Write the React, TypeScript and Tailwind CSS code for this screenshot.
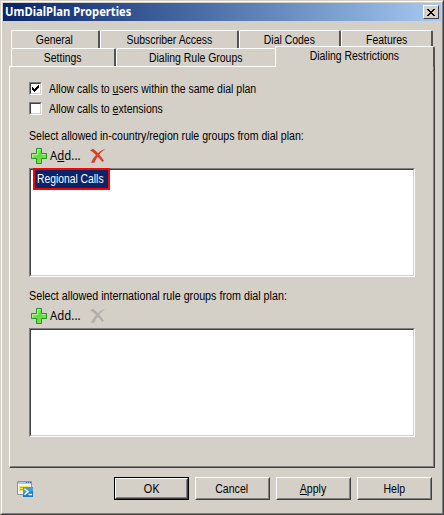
import React from "react";

const raised = "border border-t-white border-l-white border-r-[#403e40] border-b-[#403e40]";

function Plus() {
  return (
    <svg width="16" height="16" viewBox="0 0 16 16" className="shrink-0">
      <defs>
        <linearGradient id="plus" x1="0" y1="0" x2="1" y2="1">
          <stop offset="0" stopColor="#b8f090" />
          <stop offset="0.5" stopColor="#62d63f" />
          <stop offset="1" stopColor="#8cf05c" />
        </linearGradient>
      </defs>
      <path d="M5.5 .5h5v5h5v5h-5v5h-5v-5h-5v-5h5z" fill="url(#plus)" stroke="#189a1c" strokeLinejoin="round" />
      <path d="M6.5 6.5v-5h3M1.5 9.500v-3h5M10.500 6.500h4" fill="none" stroke="#c9f5ab" strokeOpacity=".7" />
    </svg>
  );
}

function Cross({ off = false }: { off?: boolean }) {
  const c = off ? "#b2afaa" : "#d83e28";
  return (
    <svg width="16" height="16" viewBox="0 0 16 16" className="shrink-0">
      <path d="M0 2.200 3.200 .7C6.500 3.200 11 8 14 12.800L12.500 14C8.500 9.500 5 5.300 0 2.200Z" fill={c} />
      <path d="M15.500 .8C11.500 3.500 6.500 9 4.600 14.600L1 15C3.200 9 8.500 3 15.500 .8Z" fill={c} />
    </svg>
  );
}

function ShellIcon() {
  return (
    <svg width="17" height="17" viewBox="0 0 17 17" className="shrink-0">
      <path d="M.5 .5h14v13H.5z" fill="#f5f6fa" stroke="#8193b0" />
      <path d="M1 1h13v2H1z" fill="#b4c5e0" />
      <path d="M9 1h1v1H9zM11 1h1v1h-1zM13 1h1v1h-1z" fill="#385a90" />
      <path d="M2 5h11v5H2z" fill="#ffe23c" />
      <path d="M3 6h8v1H3zM3 8h4v1H3z" fill="#dca51c" />
      <path d="M6 6h10v10H6z" fill="#1c7fc0" />
      <path d="M6 6h10v4L6 13z" fill="#459fd5" />
      <path d="m7.500 7.800 3.500 3-3.500 3M11.500 13.500h3.500" fill="none" stroke="white" strokeWidth="1.500" />
    </svg>
  );
}

function Text({ children, fit = "scale-x-[0.87]", left = false }: { children: React.ReactNode; fit?: string; left?: boolean }) {
  return <span className={`block w-max shrink-0 whitespace-nowrap leading-[16px] ${fit} ${left ? "origin-left" : "origin-center"}`}>{children}</span>;
}

function Tab({ w, label, last = false, pad = "" }: { w: string; label: string; last?: boolean; pad?: string }) {
  return (
    <div className={`h-[18px] ${w} shrink-0 rounded-t-[2px] border-t border-l border-white ${last ? "" : "border-r-2 border-r-[#55534f]"} flex items-center justify-center ${pad}`}>
      <Text>{label}</Text>
    </div>
  );
}

function Check({ checked = false, children }: { checked?: boolean; children: React.ReactNode }) {
  return (
    <div className="flex h-[20px] items-center">
      <div className="mr-[7px] h-[13px] w-[13px] border border-t-[#808080] border-l-[#808080] border-r-white border-b-white bg-white">
        <div className="h-[11px] w-[11px] border border-t-[#404040] border-l-[#404040] border-r-[#d4d0c8] border-b-[#d4d0c8]">
          {checked && (
            <svg width="9" height="9" viewBox="0 0 9 9" shapeRendering="crispEdges">
              <path d="M1 3h1v1h1v1h1V4h1V3h1V2h1V1h1v3H7v1H6v1H5v1H4v1H3V7H2V6H1z" />
            </svg>
          )}
        </div>
      </div>
      <div className="pt-[2px]"><Text left fit="scale-x-[0.875]">{children}</Text></div>
    </div>
  );
}

function Tools({ off = false }: { off?: boolean }) {
  return (
    <div className="flex h-[24px] items-center pl-[2px]">
      <Plus />
      <span className="ml-[3px] w-[40px] font-['Noto_Sans',sans-serif]">
        <Text left fit="scale-x-[0.95]">A{off ? "d" : <u className="underline-offset-1">d</u>}d...</Text>
      </span>
      <Cross off={off} />
    </div>
  );
}

function List({ children }: { children?: React.ReactNode }) {
  return (
    <div className="h-[109px] w-[386px] border border-t-[#808080] border-l-[#808080] border-r-white border-b-white">
      <div className="h-full border border-t-[#404040] border-l-[#404040] border-r-[#d4d0c8] border-b-[#d4d0c8] bg-white">{children}</div>
    </div>
  );
}

function Button({ children, primary = false, font = "" }: { children: React.ReactNode; primary?: boolean; font?: string }) {
  return (
    <button className={`h-[23px] w-[75px] ${primary ? "border border-black" : ""}`}>
      <span className={`flex h-full w-full ${raised}`}>
        <span className={`flex h-full w-full items-center justify-center border border-t-[#d4d0c8] border-l-[#d4d0c8] border-r-[#808080] border-b-[#808080] pr-px ${font}`}>
          <Text fit={primary ? "scale-x-[0.95]" : "scale-x-[0.88]"}>{children}</Text>
        </span>
      </span>
    </button>
  );
}

export default function App() {
  return (
    <div className="h-[515px] w-[444px] overflow-hidden border border-t-[#d4d0c8] border-l-[#d4d0c8] border-r-[#403e40] border-b-[#403e40] bg-[#d4d0c8] font-['Liberation_Sans',Arial,sans-serif] text-[12px] text-black">
      <div className="h-full w-full border border-t-white border-l-white border-r-[#808080] border-b-[#808080] pt-px pl-px">
        <div className="flex h-[18px] w-[438px] items-center justify-between bg-linear-to-r from-[#0a246a] to-[#a6caf0] pr-[2px] pl-[2px]">
          <span className="font-['Noto_Sans',sans-serif] font-bold text-white"><Text left fit="scale-x-[0.935]">UmDialPlan Properties</Text></span>
          <button className={`flex h-[14px] w-[16px] items-center justify-center bg-[#d4d0c8] ${raised}`}>
            <svg width="8" height="7" viewBox="0 0 8 7" shapeRendering="crispEdges">
              <path d="M0 0h2v1h1v1h2V1h1V0h2v1H7v1H6v1H5v1h1v1h1v1h1v1H6V6H5V5H3v1H2v1H0V6h1V5h1V4h1V3H2V2H1V1H0z" />
            </svg>
          </button>
        </div>
        <div className="pt-[9px] pl-[6px]">
          <div className="flex pl-[2px]">
            <Tab w="w-[89px]" label="General" pad="pr-[2px]" />
            <Tab w="w-[139px]" label="Subscriber Access" />
            <Tab w="w-[102px]" label="Dial Codes" />
            <Tab w="w-[92px]" label="Features" />
          </div>
          <div className="flex pl-[2px]">
            <Tab w="w-[105px]" label="Settings" />
            <Tab w="w-[159px]" label="Dialing Rule Groups" last />
            <div className="relative z-10 -mt-[2px] flex h-[21px] w-[160px] justify-center rounded-t-[2px] border-t border-l border-white border-r-2 border-r-[#55534f] bg-[#d4d0c8] pt-px">
              <Text>Dialing Restrictions</Text>
            </div>
          </div>
          <div className="-mt-px h-[402px] w-[426px] border border-t-white border-l-white border-r-[#403e40] border-b-[#403e40]">
            <div className="h-full border-r border-b border-[#808080] pt-[11px] pl-[19px]">
              <Check checked>Allow calls to <u>u</u>sers within the same dial plan</Check>
              <Check>Allow calls to <u>e</u>xtensions</Check>
              <div className="mt-[10px] h-[16px]"><Text left fit="scale-x-[0.88]">Select allowed in-country/region rule groups from dial plan:</Text></div>
              <Tools />
              <List>
                <div className="relative -top-[2px] left-[2px] flex h-[22px] w-[77px] items-center border-2 border-[#ff0000] bg-[#0a246a] pl-[2px] text-white"><Text left fit="scale-x-[0.86]">Regional Calls</Text></div>
              </List>
              <div className="mt-[11px] h-[16px]"><Text left fit="scale-x-[0.895]">Select allowed international rule groups from dial plan:</Text></div>
              <Tools off />
              <List />
            </div>
          </div>
        </div>
        <div className="flex pt-[9px] pl-[14px]">
          <div className="w-[97px] pt-[4px]"><ShellIcon /></div>
          <div className="flex gap-[6px]">
            <Button primary font="font-['Noto_Sans',sans-serif]">OK</Button>
            <Button>Cancel</Button>
            <Button><u>A</u>pply</Button>
            <Button>Help</Button>
          </div>
        </div>
      </div>
    </div>
  );
}
